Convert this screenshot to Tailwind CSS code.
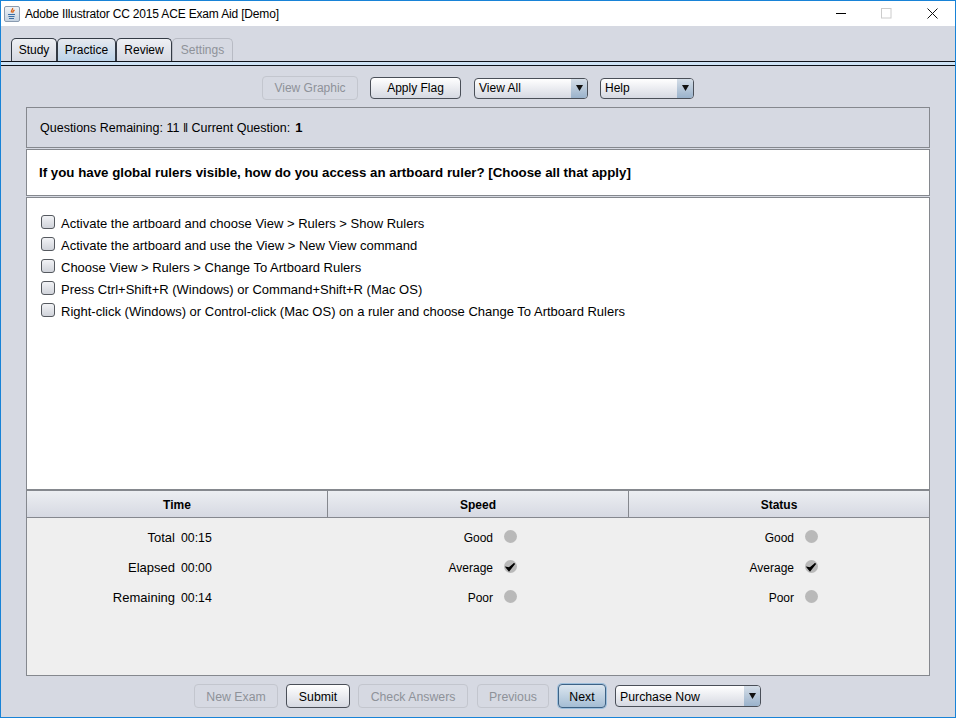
<!DOCTYPE html>
<html><head><meta charset="utf-8"><title>Adobe Illustrator CC 2015 ACE Exam Aid [Demo]</title>
<script src="https://cdn.jsdelivr.net/npm/@tailwindcss/browser@4"></script></head>
<body class="m-0 overflow-hidden">
<div class="w-[956px] h-[718px] flex flex-col bg-[#d6d9e2] border border-[#1883d7] font-['Liberation_Sans',sans-serif] text-[13px] text-black overflow-hidden">
  <!-- title bar -->
  <div class="h-[25px] bg-white flex items-center shrink-0">
    <div class="w-[16px] h-[16px] ml-[3px] border border-[#8a9bb0] rounded-[2px] bg-gradient-to-b from-[#eef2f6] to-[#c5d3e2] flex items-center justify-center">
      <svg width="12" height="14" viewBox="0 0 12 14"><path d="M6.500 1c1 1.500-2 2.500-1 4.500M8.500 3c-1 1-2.500 1.500-1.500 3" stroke="#d9651c" stroke-width="1.300" fill="none"/><path d="M2 7.500h7M2.500 9.500h6M3 11.500h5" stroke="#3b6ea5" stroke-width="1.100" fill="none"/></svg>
    </div>
    <span class="ml-[5px] text-[12px] tracking-[-0.17px] mt-[1px]">Adobe Illustrator CC 2015 ACE Exam Aid [Demo]</span>
    <div class="ml-auto flex items-center">
      <svg class="mr-[34px]" width="11" height="11" viewBox="0 0 11 11"><path d="M0 5.500h10" stroke="#000"/></svg>
      <svg class="mr-[35px]" width="11" height="11" viewBox="0 0 11 11"><rect x=".5" y=".5" width="9.500" height="9.500" fill="none" stroke="#ccc"/></svg>
      <svg class="mr-[17px]" width="11" height="11" viewBox="0 0 11 11"><path d="M.5.500l10 10M10.500.500l-10 10" stroke="#111"/></svg>
    </div>
  </div>
  <!-- tabs -->
  <div class="h-[35px] shrink-0 flex items-end pl-[10px] text-[12px]">
    <div class="h-[23px] w-[46px] border border-b-0 border-[#333a44] rounded-t-[5px] bg-gradient-to-b from-[#eef0f4] to-[#d6d9e2] flex items-center justify-center">Study</div>
    <div class="h-[23px] w-[59px] border border-b-0 border-[#333a44] rounded-t-[5px] bg-gradient-to-b from-[#e6e9ef] to-[#bcd3e8] flex items-center justify-center">Practice</div>
    <div class="h-[23px] w-[56px] border border-b-0 border-[#333a44] rounded-t-[5px] bg-gradient-to-b from-[#eef0f4] to-[#d6d9e2] flex items-center justify-center">Review</div>
    <div class="h-[23px] w-[61px] border border-b-0 border-[#b8bbc4] rounded-t-[5px] bg-[#d6d9e2] text-[#8e9299] flex items-center justify-center">Settings</div>
  </div>
  <div class="h-[5px] shrink-0 bg-[#cfe3f5] border-y border-[#10131a]"></div>
  <!-- toolbar -->
  <div class="h-[41px] shrink-0 flex items-center pt-[3px] text-[12px]">
    <div class="ml-[261px] w-[96px] h-[24px] border border-[#c3c6ce] rounded-[4px] text-[#8e9299] flex items-center justify-center">View Graphic</div>
    <div class="ml-[12px] w-[91px] h-[22px] border border-[#4a4f58] rounded-[4px] bg-gradient-to-b from-white to-[#d6d9e2] flex items-center justify-center">Apply Flag</div>
    <div class="ml-[13px] w-[114px] h-[21px] border border-[#4a4f58] rounded-[4px] bg-gradient-to-b from-white to-[#d6d9e2] flex items-stretch overflow-hidden">
      <span class="flex-1 pl-[4px] leading-[18px]">View All</span>
      <span class="w-[16px] bg-gradient-to-b from-[#d5dee8] to-[#9ab2cb] flex items-center justify-center"><svg width="7" height="6" viewBox="0 0 7 6"><path d="M0 0h7L3.500 6z" fill="#111"/></svg></span>
    </div>
    <div class="ml-[12px] w-[94px] h-[21px] border border-[#4a4f58] rounded-[4px] bg-gradient-to-b from-white to-[#d6d9e2] flex items-stretch overflow-hidden">
      <span class="flex-1 pl-[4px] leading-[18px]">Help</span>
      <span class="w-[16px] bg-gradient-to-b from-[#d5dee8] to-[#9ab2cb] flex items-center justify-center"><svg width="7" height="6" viewBox="0 0 7 6"><path d="M0 0h7L3.500 6z" fill="#111"/></svg></span>
    </div>
  </div>
  <!-- main panels -->
  <div class="mx-[25px] flex flex-col text-[12px]">
    <div class="h-[41px] border border-[#85888e] flex items-center pl-[13px] pt-[1px] gap-[5px]">
      <span class="text-[12.5px]">Questions Remaining: 11 ‖ Current Question:</span><span class="font-bold text-[13px]">1</span>
    </div>
    <div class="mt-[1px] h-[47px] border border-[#85888e] bg-white flex items-center pl-[12px] pt-[1px] font-bold text-[13.3px]">
      If you have global rulers visible, how do you access an artboard ruler? [Choose all that apply]
    </div>
    <div class="mt-[1px] h-[293px] border border-[#85888e] bg-white pl-[14px] pt-[17px] text-[13px] flex flex-col gap-[8px]">
      <label class="h-[14px] flex items-center gap-[6px]"><span class="w-[14px] h-[14px] border border-[#55595f] rounded-[3px] bg-gradient-to-b from-[#f2f3f6] to-[#d0d3da]"></span><span class="mt-[3px]">Activate the artboard and choose View &gt; Rulers &gt; Show Rulers</span></label>
      <label class="h-[14px] flex items-center gap-[6px]"><span class="w-[14px] h-[14px] border border-[#55595f] rounded-[3px] bg-gradient-to-b from-[#f2f3f6] to-[#d0d3da]"></span><span class="mt-[3px]">Activate the artboard and use the View &gt; New View command</span></label>
      <label class="h-[14px] flex items-center gap-[6px]"><span class="w-[14px] h-[14px] border border-[#55595f] rounded-[3px] bg-gradient-to-b from-[#f2f3f6] to-[#d0d3da]"></span><span class="mt-[3px]">Choose View &gt; Rulers &gt; Change To Artboard Rulers</span></label>
      <label class="h-[14px] flex items-center gap-[6px]"><span class="w-[14px] h-[14px] border border-[#55595f] rounded-[3px] bg-gradient-to-b from-[#f2f3f6] to-[#d0d3da]"></span><span class="mt-[3px]">Press Ctrl+Shift+R (Windows) or Command+Shift+R (Mac OS)</span></label>
      <label class="h-[14px] flex items-center gap-[6px]"><span class="w-[14px] h-[14px] border border-[#55595f] rounded-[3px] bg-gradient-to-b from-[#f2f3f6] to-[#d0d3da]"></span><span class="mt-[3px]">Right-click (Windows) or Control-click (Mac OS) on a ruler and choose Change To Artboard Rulers</span></label>
    </div>
    <div class="h-[186px] border border-t-0 border-[#85888e] bg-[#efefef]">
      <div class="h-[28px] grid grid-cols-[301px_301px_1fr] border-b border-[#85888e] border-t border-t-[#85888e] font-bold bg-gradient-to-b from-[#eceef2] to-[#d6d9e2]">
        <div class="flex items-center justify-center pt-[1px] border-r border-[#85888e]">Time</div>
        <div class="flex items-center justify-center pt-[1px] border-r border-[#85888e]">Speed</div>
        <div class="flex items-center justify-center pt-[1px]">Status</div>
      </div>
      <div class="grid grid-cols-[301px_301px_1fr] pt-[5px]">
        <div class="flex flex-col">
          <div class="h-[30px] flex items-center"><span class="w-[148px] text-right text-[13px]">Total</span><span class="ml-[6px] text-[12.3px]">00:15</span></div>
          <div class="h-[30px] flex items-center"><span class="w-[148px] text-right text-[13px]">Elapsed</span><span class="ml-[6px] text-[12.3px]">00:00</span></div>
          <div class="h-[30px] flex items-center"><span class="w-[148px] text-right text-[13px]">Remaining</span><span class="ml-[6px] text-[12.3px]">00:14</span></div>
        </div>
        <div class="flex flex-col">
          <div class="h-[30px] flex items-center"><span class="w-[165px] text-right">Good</span><span class="ml-[11px] mb-[3px] w-[13px] h-[13px] rounded-full bg-[#b9b9b9]"></span></div>
          <div class="h-[30px] flex items-center"><span class="w-[165px] text-right">Average</span><span class="ml-[11px] mb-[3px] w-[13px] h-[13px] rounded-full bg-[#b9b9b9] flex items-center justify-center"><svg width="11" height="10" viewBox="0 0 11 10"><path d="M1.500 5.500l2.500 3 5.500-7-5.500 4.500z" fill="#000" stroke="#000" stroke-width="1.500"/></svg></span></div>
          <div class="h-[30px] flex items-center"><span class="w-[165px] text-right">Poor</span><span class="ml-[11px] mb-[3px] w-[13px] h-[13px] rounded-full bg-[#b9b9b9]"></span></div>
        </div>
        <div class="flex flex-col">
          <div class="h-[30px] flex items-center"><span class="w-[165px] text-right">Good</span><span class="ml-[11px] mb-[3px] w-[13px] h-[13px] rounded-full bg-[#b9b9b9]"></span></div>
          <div class="h-[30px] flex items-center"><span class="w-[165px] text-right">Average</span><span class="ml-[11px] mb-[3px] w-[13px] h-[13px] rounded-full bg-[#b9b9b9] flex items-center justify-center"><svg width="11" height="10" viewBox="0 0 11 10"><path d="M1.500 5.500l2.500 3 5.500-7-5.500 4.500z" fill="#000" stroke="#000" stroke-width="1.500"/></svg></span></div>
          <div class="h-[30px] flex items-center"><span class="w-[165px] text-right">Poor</span><span class="ml-[11px] mb-[3px] w-[13px] h-[13px] rounded-full bg-[#b9b9b9]"></span></div>
        </div>
      </div>
    </div>
  </div>
  <!-- bottom -->
  <div class="flex items-center mt-[8px] text-[12.3px]">
    <div class="ml-[193px] w-[84px] h-[24px] pt-[2px] border border-[#c3c6ce] rounded-[4px] text-[#8e9299] flex items-center justify-center">New Exam</div>
    <div class="ml-[8px] w-[64px] h-[24px] pt-[2px] border border-[#4a4f58] rounded-[4px] bg-gradient-to-b from-white to-[#d6d9e2] flex items-center justify-center">Submit</div>
    <div class="ml-[8px] w-[110px] h-[24px] pt-[2px] border border-[#c3c6ce] rounded-[4px] text-[#8e9299] flex items-center justify-center">Check Answers</div>
    <div class="ml-[9px] w-[72px] h-[24px] pt-[2px] border border-[#c3c6ce] rounded-[4px] text-[#8e9299] flex items-center justify-center">Previous</div>
    <div class="ml-[9px] w-[48px] h-[24px] pt-[2px] border border-[#3d6285] rounded-[4px] bg-gradient-to-b from-[#dce6ef] to-[#a4bdd4] shadow-[0_0_0_1px_#9dbfdc] flex items-center justify-center">Next</div>
    <div class="ml-[9px] w-[146px] h-[22px] border border-[#4a4f58] rounded-[4px] bg-gradient-to-b from-white to-[#d6d9e2] flex items-stretch overflow-hidden">
      <span class="flex-1 pl-[4px] pt-[1px] leading-[21px]">Purchase Now</span>
      <span class="w-[16px] bg-gradient-to-b from-[#d5dee8] to-[#9ab2cb] flex items-center justify-center"><svg width="7" height="6" viewBox="0 0 7 6"><path d="M0 0h7L3.500 6z" fill="#111"/></svg></span>
    </div>
  </div>
</div>
</body></html>
